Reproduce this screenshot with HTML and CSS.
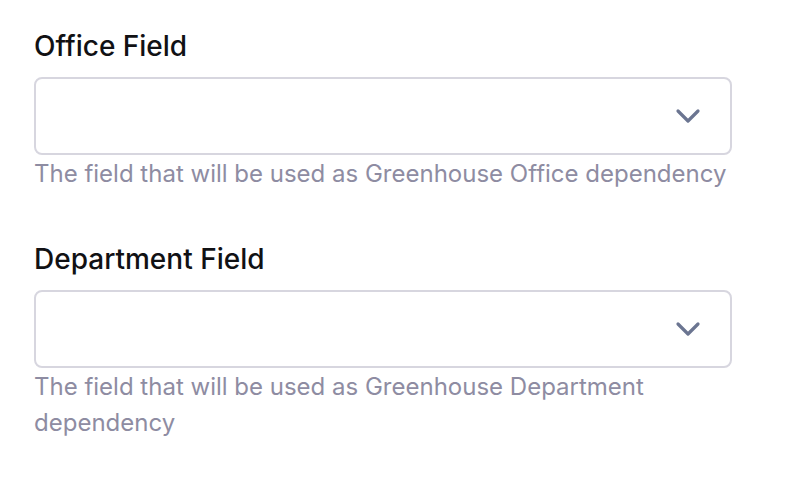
FILE: index.html
```html
<!DOCTYPE html>
<html>
<head>
<meta charset="utf-8">
<link rel="stylesheet" href="styles.css">
</head>
<body>
<div class="form">
  <div class="field">
    <label class="label">Office Field</label>
    <div class="select">
      <svg class="chev" width="26" height="18" viewBox="0 0 26 18"><path d="M3 4 L13 14 L23 4" fill="none" stroke="#6b7591" stroke-width="3.2" stroke-linecap="round" stroke-linejoin="round"/></svg>
    </div>
    <p class="help">The field that will be used as Greenhouse Office dependency</p>
  </div>
  <div class="field">
    <label class="label">Department Field</label>
    <div class="select">
      <svg class="chev" width="26" height="18" viewBox="0 0 26 18"><path d="M3 4 L13 14 L23 4" fill="none" stroke="#6b7591" stroke-width="3.2" stroke-linecap="round" stroke-linejoin="round"/></svg>
    </div>
    <p class="help">The field that will be used as Greenhouse Department dependency</p>
  </div>
</div>
</body>
</html>
```
FILE: styles.css
```css
html, body {
  margin: 0;
  padding: 0;
  background: #ffffff;
}
body {
  font-family: Inter, "Noto Sans", sans-serif;
}
.form {
  width: 698px;
  padding: 28px 0 0 34px;
  display: flex;
  flex-direction: column;
  gap: 49px;
}
.field {
  display: flex;
  flex-direction: column;
}
.label {
  font-size: 28px;
  font-weight: 500;
  color: #111114;
  line-height: 36px;
  margin-bottom: 13px;
}
.select {
  box-sizing: border-box;
  height: 78px;
  border: 2px solid #d7d6df;
  border-radius: 8px;
  display: flex;
  align-items: center;
  justify-content: flex-end;
  padding-right: 29px;
}
.chev {
  display: block;
}
.help {
  margin: 1px 0 0 0;
  font-size: 24px;
  line-height: 36px;
  color: #8e8ca2;
}
```
